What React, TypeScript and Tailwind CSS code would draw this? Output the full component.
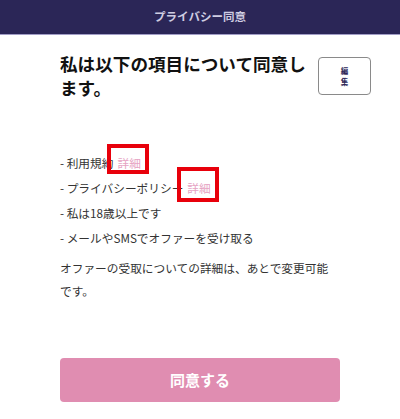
export default function App() {
  const font = { fontFamily: '"Noto Sans CJK JP", "Noto Sans", sans-serif' };
  return (
    <div className="w-[400px] h-[419px] bg-white overflow-hidden" style={font}>
      <header className="h-[35px] bg-[#2b2657] border-b border-[#a19dc6] flex items-center justify-center">
        <span className="text-[11.5px] text-[#cfcde2] font-bold">プライバシー同意</span>
      </header>

      <div className="pl-[60px] pr-[29px] pt-[17px] flex items-start">
        <h1 className="w-[250px] text-[17.6px] leading-[24px] font-bold text-[#111]">
          私は以下の項目について同意します。
        </h1>
        <button className="ml-auto mt-[5px] w-[53px] h-[38px] border border-[#8a8a8a] rounded-[4px] flex flex-col items-center justify-center text-[7.5px] leading-[11px] font-bold text-[#2b2657]">
          <span>編</span>
          <span>集</span>
        </button>
      </div>

      <ul className="pl-[60px] mt-[50px] text-[11.7px] leading-[25px] text-[#333]">
        <li>
          - 利用規約
          <span className="relative text-[#e6a3c3] ml-[4px]">
            詳細
            <span className="absolute -left-[10px] -top-[10px] w-[42px] h-[30px] border-4 border-[#e8000b]" />
          </span>
        </li>
        <li>
          - プライバシーポリシー
          <span className="relative text-[#e6a3c3] ml-[4px]">
            詳細
            <span className="absolute -left-[10px] -top-[12px] w-[42px] h-[35px] border-4 border-[#e8000b]" />
          </span>
        </li>
        <li>- 私は18歳以上です</li>
        <li>- メールやSMSでオファーを受け取る</li>
      </ul>

      <p className="pl-[60px] w-[335px] mt-[6px] text-[11.7px] leading-[23px] text-[#333]">
        オファーの受取についての詳細は、あとで変更可能です。
      </p>

      <div className="px-[60px] mt-[56px]">
        <button className="w-[280px] h-[44px] rounded-[4px] bg-[#e08db1] text-white text-[15px] font-bold">
          同意する
        </button>
      </div>
    </div>
  );
}
